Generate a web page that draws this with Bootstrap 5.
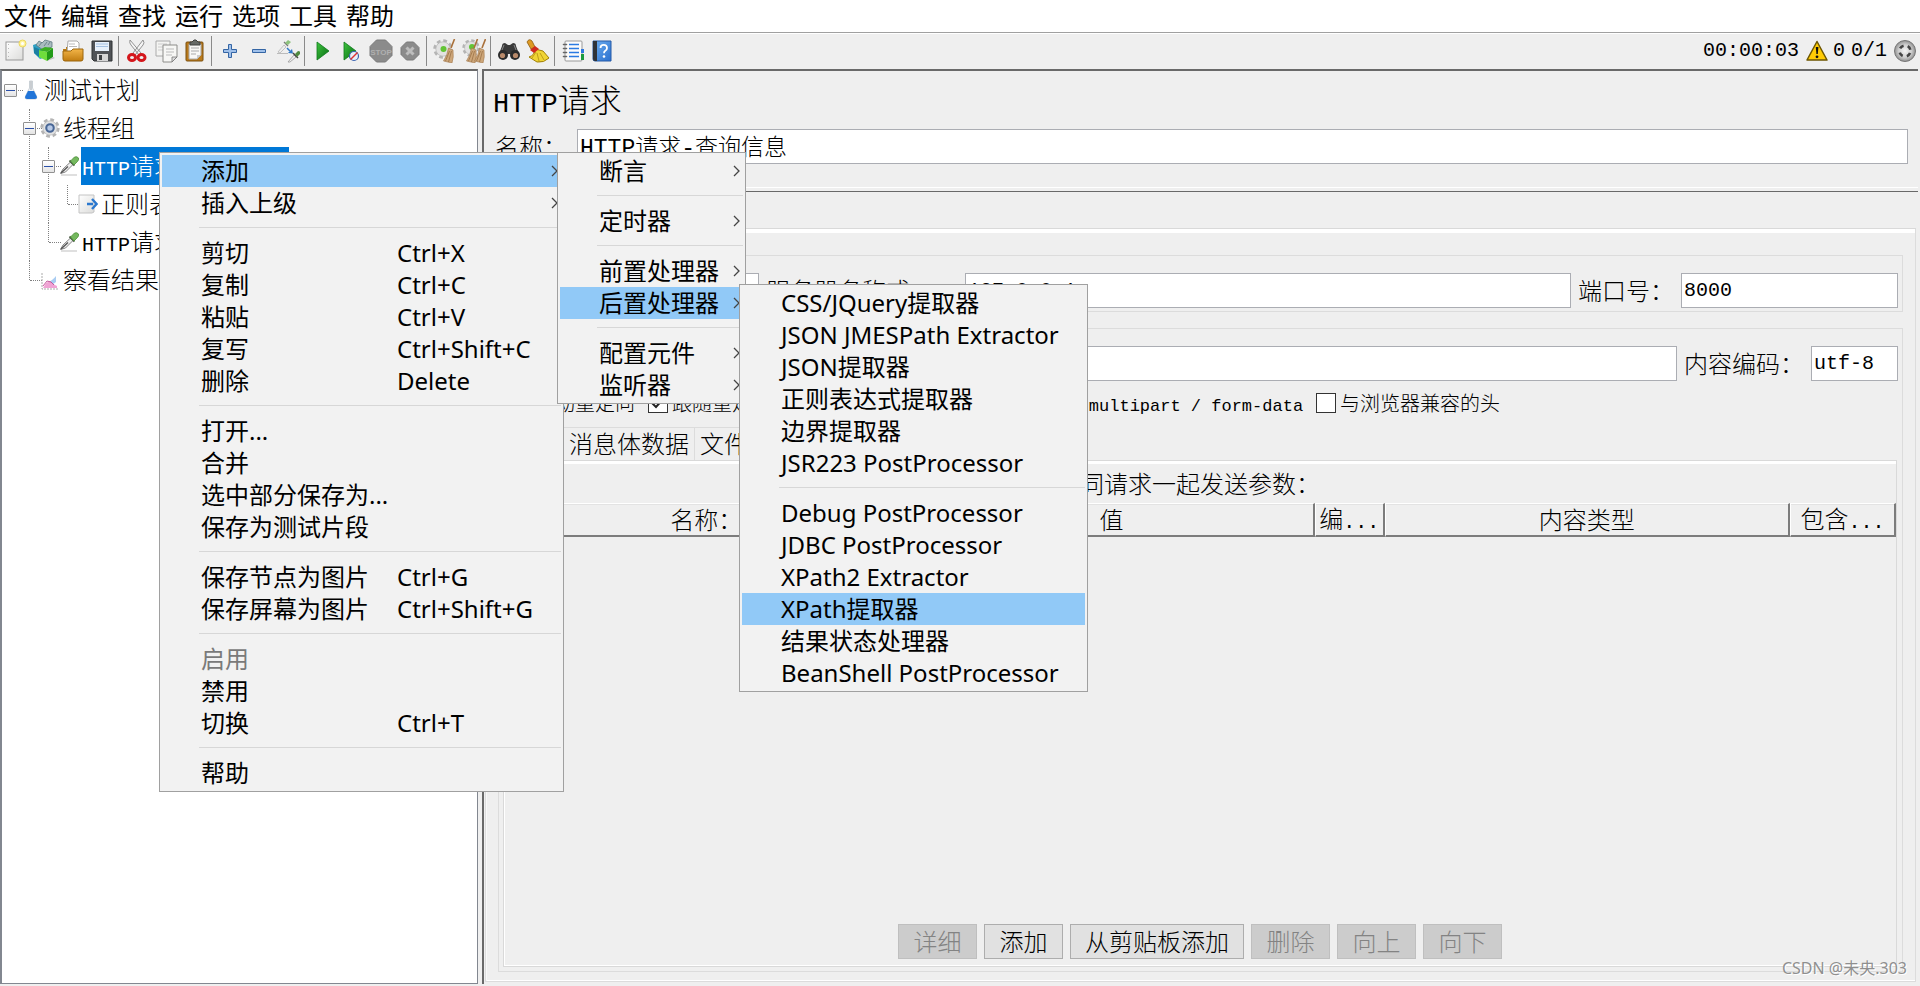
<!DOCTYPE html>
<html lang="zh-CN">
<head>
<meta charset="utf-8">
<meta name="viewport" content="width=device-width, initial-scale=1">
<title>HTTP请求</title>
<link rel="stylesheet" href="https://cdn.jsdelivr.net/npm/bootstrap@5.3.0/dist/css/bootstrap.min.css">
<script src="https://cdn.jsdelivr.net/npm/bootstrap@5.3.0/dist/js/bootstrap.bundle.min.js"></script>
<style>
  :root { --face: #efefef; --line: #dcdcdc; --dark: #696969; --mid: #a0a0a0; }
  body { background: var(--face); color: #000; font-family: "Noto Sans CJK SC", sans-serif; font-size: 24px; font-weight: 300; line-height: 32px; overflow: hidden; }
  label { white-space: nowrap; }
  .latin { font-family: "Liberation Mono", monospace; font-size: 20px; font-weight: 400; line-height: 1; }
  .ui-font { font-family: "Noto Sans", "Noto Sans CJK SC", sans-serif; font-weight: 400; }

  .menubar { background: #fff; height: 33px; padding: 0 4px; gap: 9px; border-bottom: 1px solid var(--mid); line-height: 32px; }
  .menubar a { color: #000; text-decoration: none; }

  .toolbar { height: 36px; border-top: 1px solid #fff; padding: 0 3px 2px 0; }
  .tool { width: 29px; height: 30px; padding: 0; border: 0; background: none; display: flex; align-items: center; justify-content: center; }
  .tool svg, .status svg { width: 24px; height: 24px; display: block; }
  .tool-sep { width: 1px; height: 30px; margin: 0 3px 0 2px; background: #8a8a8a; }
  .status { gap: 6px; }

  .tree-pane { width: 478px; flex: none; background: #fff; border: solid #828790; border-width: 2px 1px 1px 2px; border-top-color: var(--dark); overflow: hidden; }
  .tree, .tree ul { list-style: none; margin: 0; padding: 0; }
  .tree ul { padding-left: 19px; }
  .tree li { position: relative; }
  .tree li li::before { content: ""; position: absolute; left: 8px; top: 0; bottom: 0; border-left: 1px dotted #808080; }
  .tree li li:last-child::before { bottom: auto; height: 19px; }
  .tree-row { position: relative; height: 38px; padding-left: 2px; white-space: nowrap; }
  .tree-row::after { content: ""; position: absolute; left: 9px; width: 12px; top: 19px; border-top: 1px dotted #808080; }
  .knob { position: relative; z-index: 1; width: 13px; height: 13px; flex: none; margin-right: 4px; padding: 0; border: 1px solid #919191; border-radius: 1px; background: linear-gradient(#fff, #e4e4e4); display: flex; align-items: center; justify-content: center; }
  .knob i { width: 9px; height: 1px; background: #2a4fa8; }
  .leaf { width: 13px; margin-right: 4px; flex: none; }
  .tree-row svg { width: 20px; height: 20px; flex: none; margin-right: 2px; position: relative; z-index: 1; }
  .tree-row a { color: #000; text-decoration: none; height: 38px; line-height: 35px; padding: 0 1px; }
  .tree-row a.picked { background: #0078d7; color: #fff; width: 208px; }

  .main-area { min-height: 0; padding-bottom: 2px; }
  .work-pane { min-width: 0; border: solid var(--dark); border-width: 2px 0 0 2px; margin-left: 4px; margin-right: 2px; }
  .pane-title { font-size: 32px; line-height: 46px; padding: 4px 9px 8px; }
  .pane-title .latin { font-size: 27px; }
  .field-box { height: 35px; border: 1px solid #abadb3; border-radius: 0; padding: 0 2px; background: #fff; color: #000; font-family: "Liberation Mono", "Noto Sans CJK SC", monospace; font-size: 20px; font-weight: 300; min-width: 0; }
  .name-row { padding: 0 10px 0 11px; gap: 10px; margin-bottom: 23px; line-height: 30px; }
  .name-row label { padding-bottom: 2px; }
  .name-row input { font-size: 23px; padding-bottom: 3px; }
  .divider { height: 5px; border-top: 1px solid #fff; border-bottom: 1px solid var(--dark); margin-bottom: 36px; }
  .tab-page { border: 1px solid var(--line); border-top-color: #d9d9d9; margin: 0 2px 2px 1px; box-shadow: inset 0 4px #fff, inset 1px 0 #f8f8f8, inset 0 -1px #fff; padding: 26px 12px 9px; }
  .group { border: 1px solid var(--line); padding: 17px 4px 3px; }
  .fields { gap: 7px; }
  .fields label { padding-bottom: 2px; line-height: 30px; }
  .proto { width: 177px; }
  .port { width: 217px; }
  .enc { width: 87px; }
  .lab-server { flex: 0 0 190px; } .lab-port { flex: 0 0 93px; } .lab-enc { flex: 0 0 117px; }
  .opts { height: 46px; font-size: 20px; padding: 0 0 3px 8px; gap: 13px; white-space: nowrap; }
  .opts .latin { font-size: 17px; white-space: pre; }
  .opts label { display: flex; align-items: center; gap: 4px; }
  .tick { appearance: none; width: 20px; height: 20px; margin: 0; border: 1px solid #333; background: #fff; }
  .tick:checked { background: #fff url("data:image/svg+xml,%3Csvg xmlns='http://www.w3.org/2000/svg' viewBox='0 0 18 18'%3E%3Cpath d='M3 9l4 4 8-9' fill='none' stroke='%23222' stroke-width='2'/%3E%3C/svg%3E"); }
  .tabs { height: 33px; }
  .tabs button { border: 1px solid var(--line); border-width: 1px 1px 0 0; background: none; padding: 0 5px 2px; color: #000; line-height: 30px; font-weight: 300; }
  .tabs button:first-child { width: 61px; border-left-width: 1px; }
  .params { border: 1px solid #d9d9d9; margin: 0 1px 1px 0; box-shadow: inset 1px -1px #fff; padding-bottom: 7px; }
  .params-band { height: 3px; background: #fff; }
  .params-title { line-height: 37px; padding-bottom: 2px; }
  .grid-table { table-layout: fixed; width: 100%; border-collapse: separate; border-spacing: 0; }
  .grid-table th { height: 34px; padding: 0 0 2px; font-weight: 300; text-align: center; line-height: 26px; border: solid; border-width: 1px 2px 2px 1px; border-color: #fff #7c7c7c #7c7c7c #fff; box-shadow: inset 0 1px #e3e3e3; white-space: nowrap; }
  .col-enc { width: 70px; } .col-inc { width: 106px; }
  .push { min-width: 79px; height: 35px; border: 1px solid #adadad; background: #e1e1e1; color: #000; padding: 0 14px 2px; line-height: 30px; font-weight: 300; }
  .push:disabled { background: #ccc; border-color: #bfbfbf; color: #838383; }
  .actions { gap: 7px; }

  .popup { position: absolute; z-index: 5; margin: 0; padding: 2px; list-style: none; background: #f2f2f2; border: 1px solid var(--mid); white-space: nowrap; }
  .popup li { position: relative; }
  .popup .entry { display: flex; align-items: center; width: 100%; height: 32px; padding: 0 0 0 39px; border: 0; background: none; color: #000; text-align: left; line-height: 30px; }
  .popup .entry:disabled { color: #7a7a7a; }
  .popup .entry.on { background: #91c9f7; }
  .popup .rule { height: 18px; padding: 8px 0 9px 37px; }
  .popup .rule::before { content: ""; display: block; height: 1px; background: #d7d7d7; }
  .popup .cap { width: 196px; }
  .popup svg { width: 7px; height: 12px; margin-left: auto; margin-right: 3px; }
  .menu-main { left: 159px; top: 152px; width: 405px; }
  .menu-add { left: 395px; top: -3px; width: 189px; }
  .menu-post { left: 179px; top: -3px; width: 349px; }
  .watermark { position: absolute; right: 13px; bottom: 6px; font-size: 16px; line-height: 24px; color: #8f8f8f; text-shadow: 1px 1px #fff; }
</style>
</head>
<body>
<svg width="0" height="0" class="position-absolute">
  <defs>
    <linearGradient id="gGreen" x2="1" y2="1"><stop offset="0" stop-color="#3fc43f"/><stop offset="1" stop-color="#066b12"/></linearGradient>
    <linearGradient id="gGold" x2="0" y2="1"><stop offset="0" stop-color="#f3b549"/><stop offset="1" stop-color="#c17d11"/></linearGradient>
    <linearGradient id="gPaper" x2="1" y2="1"><stop offset="0" stop-color="#fff"/><stop offset="1" stop-color="#dcdcda"/></linearGradient>
    <linearGradient id="gBlue" x2="1" y2="1"><stop offset="0" stop-color="#6fb0f0"/><stop offset="1" stop-color="#2b70cf"/></linearGradient>
    <radialGradient id="gBall"><stop offset="0" stop-color="#f4f4f4"/><stop offset=".6" stop-color="#d0d0d0"/><stop offset="1" stop-color="#909090"/></radialGradient>
    <symbol id="chev" viewBox="0 0 7 12"><path d="M1 1l5 5-5 5" fill="none" stroke="#444" stroke-width="1.3"/></symbol>
    <symbol id="pipette" viewBox="0 0 20 20"><path d="M2 19h16" stroke="#d4d4d4" stroke-width="1.5"/><path d="M1.500 17.500L4 13l7.500-7 2.500 2.500L6.500 16z" fill="#f0f0f0" stroke="#777" stroke-width=".9"/><path d="M2 17l7-6.500" stroke="#555" stroke-width="1.400"/><path d="M10.500 4.500l5 5" stroke="#46583f" stroke-width="1.800"/><path d="M11.500 5l4-4q2.500-1 4 1 .5 2-1 3.500L15 9z" fill="#74b85e" stroke="#4d8f3a" stroke-width=".8"/></symbol>
    <symbol id="cog" viewBox="0 0 24 24"><circle cx="12" cy="12" r="9.800" stroke="#b4b4b4" stroke-width="3.600" stroke-dasharray="4.400 3.297" fill="none"/><circle cx="12" cy="12" r="8.600" fill="#e2e2e2" stroke="#b4b4b4" stroke-width=".8"/></symbol>
    <symbol id="brush" viewBox="0 0 24 24"><path d="M21.500 0L18 9" stroke="#a9703a" stroke-width="1.600"/><path d="M15.500 9l4.500 2q1 7-1 13l-8.500-2q4-6 5-13z" fill="#cda679" stroke="#a0764a" stroke-width=".6"/><path d="M16.500 12l-4 10M18.500 12l-3 11" stroke="#946a3f" stroke-width=".7"/></symbol>
  </defs>
</svg>

<div class="d-flex flex-column vh-100 position-relative">
  <nav class="menubar ui-font d-flex">
    <a href="#">文件</a><a href="#">编辑</a><a href="#">查找</a><a href="#">运行</a><a href="#">选项</a><a href="#">工具</a><a href="#">帮助</a>
  </nav>

  <div class="toolbar d-flex align-items-center" role="toolbar">
    <button class="tool" aria-label="新建"><svg viewBox="0 0 24 24"><rect x="3" y="3" width="17" height="18" fill="url(#gPaper)" stroke="#999"/><path d="M5.500 5v14" stroke="#bbb" stroke-dasharray="1 3"/><circle cx="19.500" cy="4.500" r="3.500" fill="#fff3a0" stroke="#ecd75a"/><circle cx="19.500" cy="4.500" r="1.500" fill="#fff"/></svg></button>
    <button class="tool" aria-label="模板"><svg viewBox="0 0 24 24"><path d="M1 6l6-2 4 3v12l-3 1-6-6z" fill="#2ea0c4"/><path d="M4 6l3-4 3 2 3-3 7 2v5l-9 3z" fill="#a9bcc0" stroke="#5e7880" stroke-width=".8"/><path d="M7 7l3-4M12 7l3-4M16 6l2-3" stroke="#5e7880" stroke-width=".8"/><path d="M2 8l5 2v8l-5-4z" fill="#1b7fa3"/><path d="M7 11l8 2v9l-8-4z" fill="#6fdd3c"/><path d="M15 13l6-4v9l-6 4z" fill="#239a18"/><path d="M7 11l6-3 8 1-6 4z" fill="#3aae22"/><path d="M15 22l8-3-2-1z" fill="#bbb"/></svg></button>
    <button class="tool" aria-label="打开"><svg viewBox="0 0 24 24"><path d="M2 10h3V8h6v2h9l1 12H3z" fill="#b9790f"/><path d="M7 2h9l2 2v9H6z" fill="#fff" stroke="#aaa"/><path d="M8 5h6M8 7.500h8" stroke="#bbb"/><path d="M2 12h8l2-2h10v10q0 2-2 2H4q-2 0-2-2z" fill="url(#gGold)" stroke="#9c660c"/></svg></button>
    <button class="tool" aria-label="保存"><svg viewBox="0 0 24 24"><path d="M2 2h20v20H4l-2-2z" fill="#505357" stroke="#2f3235"/><path d="M5 3h14v9H5z" fill="#e8f1fb"/><path d="M6 5h12M6 7.500h12" stroke="#a5c1e2"/><path d="M7 15h11v7H7z" fill="#d6d6d6"/><path d="M9 16h3v5H9z" fill="#3d4043"/></svg></button>
    <span class="tool-sep"></span>
    <button class="tool" aria-label="剪切"><svg viewBox="0 0 24 24"><path d="M5 1q-1 3 1 5l8 10 2-2zM18 1q2 3 0 5l-8 10-2-2z" fill="#f5f5f5" stroke="#888" stroke-width=".9"/><ellipse cx="7" cy="18.500" rx="3.500" ry="3" fill="none" stroke="#d4161b" stroke-width="3"/><ellipse cx="16.500" cy="18.500" rx="3.500" ry="3" fill="none" stroke="#d4161b" stroke-width="3"/></svg></button>
    <button class="tool" aria-label="复制"><svg viewBox="0 0 24 24"><path d="M2 2h14v15H2z" fill="#f4f4f2" stroke="#aaa"/><path d="M4 5h9M4 8h6M4 11h5" stroke="#ccc"/><path d="M9 6h14v12l-5 5H9z" fill="#f7f7f5" stroke="#8d8d8a"/><path d="M12 10h8M12 13h8M12 16h6" stroke="#bbb"/><path d="M18 23v-5h5z" fill="#ddd" stroke="#777" stroke-width=".8"/></svg></button>
    <button class="tool" aria-label="粘贴"><svg viewBox="0 0 24 24"><rect x="3" y="3" width="17" height="19" rx="1" fill="#b97a1d" stroke="#7d500e"/><path d="M6 5h12v11l-4 4H6z" fill="#f8f8f6" stroke="#aaa"/><path d="M8 9h8M8 12h8M8 15h5" stroke="#aaa"/><path d="M7 6V3h2l2-2h2l2 2h2v3z" fill="#666a66" stroke="#3e403e"/><path d="M14 20v-4h4z" fill="#ccc"/></svg></button>
    <span class="tool-sep"></span>
    <button class="tool" aria-label="展开"><svg viewBox="0 0 24 24"><path d="M10.500 5.500h3v5h5v3h-5v5h-3v-5h-5v-3h5z" fill="#9fc0ea" stroke="#3465a4"/></svg></button>
    <button class="tool" aria-label="收起"><svg viewBox="0 0 24 24"><path d="M5.500 10.500h13v3h-13z" fill="#9fc0ea" stroke="#3465a4"/></svg></button>
    <button class="tool" aria-label="切换状态"><svg viewBox="0 0 24 24"><path d="M2 13l6-7 2 2-6 6z" fill="#eee" stroke="#b5b5b5" stroke-width=".8"/><path d="M8 3l4 4" stroke="#777" stroke-width="1.200"/><path d="M9 4l3-3 3 2-3 3z" fill="#8dc27c"/><path d="M1 14.500h11" stroke="#bbb"/><path d="M11 9l3 3" stroke="#2f78c8" stroke-width="1.500"/><path d="M17 14.500l-5-.5 4-4z" fill="#2f78c8"/><path d="M12 23l6-7 2 2-6 5z" fill="#eee" stroke="#999" stroke-width=".8"/><path d="M17 14l5 5" stroke="#444" stroke-width="1.500"/><path d="M19 15l3-3q3 0 2 3l-3 3z" fill="#4f8a3f"/></svg></button>
    <span class="tool-sep"></span>
    <button class="tool" aria-label="启动"><svg viewBox="0 0 24 24"><path d="M6 3l12 9-12 9z" fill="url(#gGreen)" stroke="#0d7a1b" stroke-width=".8"/></svg></button>
    <button class="tool" aria-label="不停顿启动"><svg viewBox="0 0 24 24"><path d="M4 3l12 9-12 9z" fill="url(#gGreen)" stroke="#0d7a1b" stroke-width=".8"/><circle cx="14" cy="17" r="4.500" fill="#e9eef8" stroke="#3c63b0" stroke-width="1.200"/><path d="M10.500 20.500l7-7" stroke="#d33" stroke-width="1.500"/></svg></button>
    <button class="tool" aria-label="停止" disabled><svg viewBox="0 0 24 24"><path d="M7.500 1h9L23 7.500v9L16.500 23h-9L1 16.500v-9z" fill="#8b8b8b" stroke="#7a7a7a"/><text x="12" y="15.500" font-family="Liberation Sans" font-size="8" font-weight="700" text-anchor="middle" fill="#b0b0b0">STOP</text></svg></button>
    <button class="tool" aria-label="关闭" disabled><svg viewBox="0 0 24 24"><path d="M8.500 3h7L21 8.500v7L15.500 21h-7L3 15.500v-7z" fill="#8b8b8b" stroke="#7a7a7a"/><path d="M8.500 8.500l7 7m0-7l-7 7" stroke="#bdbdbd" stroke-width="3"/></svg></button>
    <span class="tool-sep"></span>
    <button class="tool" aria-label="清除"><svg viewBox="0 0 24 24"><use href="#cog" x="0" y="0" width="20" height="20"/><circle cx="10.500" cy="10" r="3" fill="#63c436"/><use href="#brush" width="24" height="24"/></svg></button>
    <button class="tool" aria-label="清除全部"><svg viewBox="0 0 24 24"><use href="#cog" x="0" y="0" width="18" height="18"/><circle cx="10" cy="8" r="3" fill="#63c436"/><use href="#brush" x="-6" width="24" height="24"/><use href="#brush" x="2" width="24" height="24"/></svg></button>
    <span class="tool-sep"></span>
    <button class="tool" aria-label="查找"><svg viewBox="0 0 24 24"><path d="M5 7q0-3 3-3l3 2h2l3-2q3 0 3 3l3 8H2z" fill="#3a3a3a"/><circle cx="6" cy="16" r="5" fill="#2b2b2b"/><circle cx="18" cy="16" r="5" fill="#2b2b2b"/><circle cx="5.500" cy="16.500" r="2.600" fill="#b98a6a"/><circle cx="18.500" cy="16.500" r="2.600" fill="#b98a6a"/><path d="M7 6l-2 5M17 6l2 5" stroke="#888"/></svg></button>
    <button class="tool" aria-label="重置查找"><svg viewBox="0 0 24 24"><path d="M1 3q2-4 5-1l3 6-4 2z" fill="#dd9a24" stroke="#8e5b0c" stroke-width=".8"/><path d="M9 10l8 2 6 7q-5 5-12 4l-8-5q6-2 6-8z" fill="#f0d434" stroke="#a18108"/><path d="M11 14l2 8M14 14l4 7M10 13l-4 6" stroke="#b89716" stroke-width=".9"/><path d="M4 11l5-4 4 3-5 4z" fill="#cf2a1e"/></svg></button>
    <span class="tool-sep"></span>
    <button class="tool" aria-label="函数助手"><svg viewBox="0 0 24 24"><rect x="4" y="2" width="17" height="20" rx="1" fill="#fbfbfb" stroke="#999"/><path d="M20 10h3v4h-3z" fill="#2f78e0"/><path d="M20 15h3v6h-3z" fill="#1c9a3e"/><path d="M8 5.500h10M8 9.500h10M8 13.500h10M8 17.500h10" stroke="#2a7ae2" stroke-width="1.400"/><path d="M2.500 5.500h3M2.500 9.500h3M2.500 13.500h3M2.500 17.500h3" stroke="#666" stroke-width="1.600" stroke-linecap="round"/></svg></button>
    <button class="tool" aria-label="帮助"><svg viewBox="0 0 24 24"><path d="M3 2h18v20H5q-2 0-2-2z" fill="url(#gBlue)" stroke="#265aa6"/><path d="M3 2h4v20H5q-2 0-2-2z" fill="#2f3338"/><path d="M10.500 9q0-3.200 3.200-3.200T17 9q0 1.800-1.700 2.800-1.300.8-1.300 2.500" fill="none" stroke="#fff" stroke-width="1.800"/><circle cx="14" cy="17.500" r="1.300" fill="#fff"/></svg></button>
    <div class="status d-flex align-items-center ms-auto">
      <span class="latin">00:00:03</span>
      <span class="d-flex align-items-center"><svg viewBox="0 0 24 24"><path d="M12 2.500L22 21H2z" fill="#ffcb05" stroke="#6d5600" stroke-width="1.500" stroke-linejoin="round"/><path d="M10.800 8h2.600l-.6 7h-1.400z" fill="#111"/><circle cx="12" cy="17.800" r="1.400" fill="#111"/></svg>
      <span class="latin ps-1">0</span></span>
      <span class="latin">0/1</span>
      <svg viewBox="0 0 24 24"><circle cx="12" cy="12" r="10.500" fill="url(#gBall)" stroke="#777"/><circle cx="12" cy="12" r="5.500" fill="none" stroke="#444" stroke-width="2.600" stroke-dasharray="4.300 4.340" stroke-dashoffset="-2.200"/></svg>
    </div>
  </div>

  <main class="main-area d-flex flex-grow-1">
    <section class="tree-pane">
      <ul class="tree">
        <li>
          <div class="tree-row d-flex align-items-center"><button class="knob" aria-label="折叠"><i></i></button><svg viewBox="0 0 20 20"><path d="M8.500 1h3v7l4 8q1 3-1 3h-9q-2 0-1-3l4-8z" fill="#eef2f6" stroke="#bfc6cd" stroke-width=".8"/><path d="M7 11h6l3 6q0 2-2 2H6q-2 0-2-2z" fill="#2275d8"/><path d="M9 1h2v9H9z" fill="#c9cdd1"/></svg><a href="#">测试计划</a></div>
          <ul>
            <li>
              <div class="tree-row d-flex align-items-center"><button class="knob" aria-label="折叠"><i></i></button><svg viewBox="0 0 24 24"><use href="#cog"/><circle cx="12" cy="12" r="4.500" fill="#b7c9e6" stroke="#496796" stroke-width="2.500"/></svg><a href="#">线程组</a></div>
              <ul>
                <li>
                  <div class="tree-row d-flex align-items-center"><button class="knob" aria-label="折叠"><i></i></button><svg><use href="#pipette"/></svg><a href="#" class="picked"><span class="latin">HTTP</span>请求<span class="latin">-</span>查询信息</a></div>
                  <ul>
                    <li><div class="tree-row d-flex align-items-center"><span class="leaf"></span><svg viewBox="0 0 20 20"><path d="M1 1h15v17l-2 1H1z" fill="url(#gPaper)" stroke="#c4c4c4"/><path d="M9 10h6M14 5l4.500 5-4.500 5" fill="none" stroke="#2b78cf" stroke-width="2.400"/></svg><a href="#">正则表达式提取器</a></div></li>
                  </ul>
                </li>
                <li><div class="tree-row d-flex align-items-center"><span class="leaf"></span><svg><use href="#pipette"/></svg><a href="#"><span class="latin">HTTP</span>请求</a></div></li>
              </ul>
            </li>
            <li><div class="tree-row d-flex align-items-center"><span class="leaf"></span><svg viewBox="0 0 20 20"><path d="M2 3v16h16" fill="none" stroke="#aaa" stroke-dasharray="2 1"/><path d="M8 12q4-1 8-6v6l-4 3z" fill="#a9cdf2"/><path d="M3 18l3-5 4-2 3 3 4 2v2z" fill="#f0a3d4"/><path d="M3 16l4-5 4 1 3 3" fill="none" stroke="#c45a9e"/></svg><a href="#">察看结果树</a></div></li>
          </ul>
        </li>
      </ul>
    </section>

    <section class="work-pane d-flex flex-column flex-grow-1">
      <h1 class="pane-title m-0 fw-light"><span class="latin">HTTP</span>请求</h1>
      <div class="name-row d-flex align-items-center">
        <label for="nm">名称：</label><input id="nm" class="field-box flex-grow-1" value="HTTP请求-查询信息">
      </div>
      <div class="divider"></div>
      <div class="tab-page d-flex flex-column flex-grow-1">
        <div class="group fields d-flex align-items-center mb-3">
          <label for="pr">协议：</label><input id="pr" class="field-box proto">
          <label for="sv" class="lab-server">服务器名称或<span class="latin">IP</span>：</label><input id="sv" class="field-box flex-grow-1" value="127.0.0.1">
          <label for="po" class="lab-port">端口号：</label><input id="po" class="field-box port" value="8000">
        </div>
        <div class="group d-flex flex-column flex-grow-1">
          <div class="fields d-flex align-items-center">
            <select class="field-box proto" aria-label="方法"><option>GET</option></select>
            <label for="pa">路径：</label><input id="pa" class="field-box flex-grow-1">
            <label for="en" class="lab-enc">内容编码：</label><input id="en" class="field-box enc" value="utf-8">
          </div>
          <div class="opts d-flex align-items-center">
            <label><input type="checkbox" class="tick">自动重定向</label>
            <label><input type="checkbox" class="tick" checked>跟随重定向</label>
            <label><input type="checkbox" class="tick" checked><span>使用<span class="latin"> KeepAlive</span></span></label>
            <label><input type="checkbox" class="tick"><span>对<span class="latin">POST</span>使用<span class="latin">multipart / form-data</span></span></label>
            <label><input type="checkbox" class="tick">与浏览器兼容的头</label>
          </div>
          <div class="tabs d-flex">
            <button>参数</button><button>消息体数据</button><button>文件上传</button>
          </div>
          <div class="params d-flex flex-column flex-grow-1">
            <div class="params-band"></div>
            <div class="params-title text-center">同请求一起发送参数：</div>
            <table class="grid-table">
              <colgroup><col><col><col class="col-enc"><col><col class="col-inc"></colgroup>
              <thead><tr><th>名称：</th><th>值</th><th>编<span class="latin">...</span></th><th>内容类型</th><th>包含<span class="latin">...</span></th></tr></thead>
            </table>
            <div class="actions d-flex justify-content-center mt-auto">
              <button class="push" disabled>详细</button><button class="push">添加</button><button class="push">从剪贴板添加</button><button class="push" disabled>删除</button><button class="push" disabled>向上</button><button class="push" disabled>向下</button>
            </div>
          </div>
        </div>
      </div>
    </section>
  </main>

  <ul class="popup menu-main ui-font">
    <li><button class="entry on">添加<svg><use href="#chev"/></svg></button>
      <ul class="popup menu-add">
        <li><button class="entry">断言<svg><use href="#chev"/></svg></button></li>
        <li class="rule"></li>
        <li><button class="entry">定时器<svg><use href="#chev"/></svg></button></li>
        <li class="rule"></li>
        <li><button class="entry">前置处理器<svg><use href="#chev"/></svg></button></li>
        <li><button class="entry on">后置处理器<svg><use href="#chev"/></svg></button>
          <ul class="popup menu-post">
            <li><button class="entry">CSS/JQuery提取器</button></li>
            <li><button class="entry">JSON JMESPath Extractor</button></li>
            <li><button class="entry">JSON提取器</button></li>
            <li><button class="entry">正则表达式提取器</button></li>
            <li><button class="entry">边界提取器</button></li>
            <li><button class="entry">JSR223 PostProcessor</button></li>
            <li class="rule"></li>
            <li><button class="entry">Debug PostProcessor</button></li>
            <li><button class="entry">JDBC PostProcessor</button></li>
            <li><button class="entry">XPath2 Extractor</button></li>
            <li><button class="entry on">XPath提取器</button></li>
            <li><button class="entry">结果状态处理器</button></li>
            <li><button class="entry">BeanShell PostProcessor</button></li>
          </ul>
        </li>
        <li class="rule"></li>
        <li><button class="entry">配置元件<svg><use href="#chev"/></svg></button></li>
        <li><button class="entry">监听器<svg><use href="#chev"/></svg></button></li>
      </ul>
    </li>
    <li><button class="entry">插入上级<svg><use href="#chev"/></svg></button></li>
    <li class="rule"></li>
    <li><button class="entry"><span class="cap">剪切</span>Ctrl+X</button></li>
    <li><button class="entry"><span class="cap">复制</span>Ctrl+C</button></li>
    <li><button class="entry"><span class="cap">粘贴</span>Ctrl+V</button></li>
    <li><button class="entry"><span class="cap">复写</span>Ctrl+Shift+C</button></li>
    <li><button class="entry"><span class="cap">删除</span>Delete</button></li>
    <li class="rule"></li>
    <li><button class="entry">打开...</button></li>
    <li><button class="entry">合并</button></li>
    <li><button class="entry">选中部分保存为...</button></li>
    <li><button class="entry">保存为测试片段</button></li>
    <li class="rule"></li>
    <li><button class="entry"><span class="cap">保存节点为图片</span>Ctrl+G</button></li>
    <li><button class="entry"><span class="cap">保存屏幕为图片</span>Ctrl+Shift+G</button></li>
    <li class="rule"></li>
    <li><button class="entry" disabled>启用</button></li>
    <li><button class="entry">禁用</button></li>
    <li><button class="entry"><span class="cap">切换</span>Ctrl+T</button></li>
    <li class="rule"></li>
    <li><button class="entry">帮助</button></li>
  </ul>
  <div class="watermark ui-font">CSDN @未央.303</div>
</div>
</body>
</html>
